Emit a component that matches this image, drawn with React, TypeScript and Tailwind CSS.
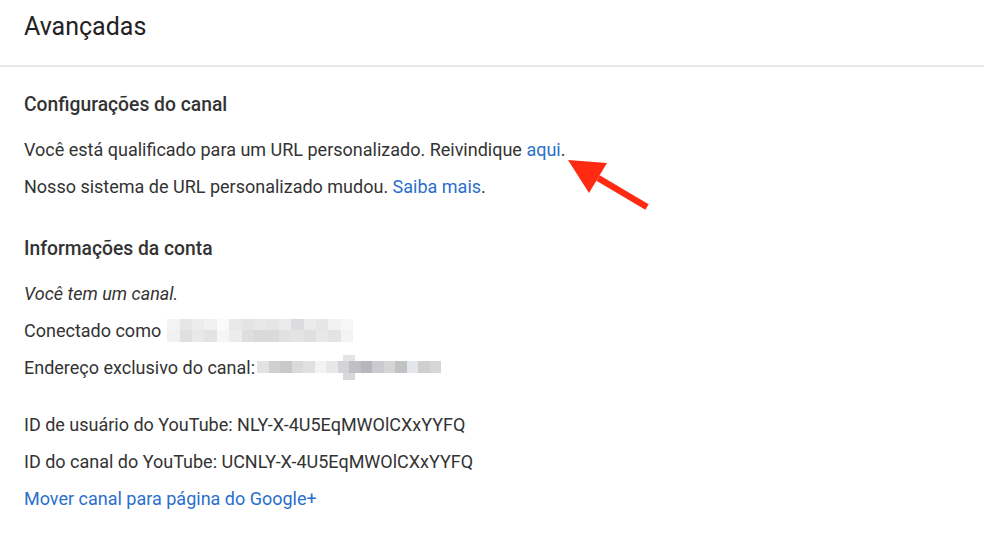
import React from "react";

const blur1: string[][] = [
  ["#f3f3f3", "#e6e6e6", "#ececec", "#f1f1f1", "#fafafa", "#e9e9e9", "#e4e4e4", "#e8e8e8", "#e6e6e6", "#eaeaea", "#dcdce0", "#ebebeb", "#e6e6e6", "#f2f2f2", "#f6f6f6"],
  ["#f1f1f1", "#e0e0e0", "#e9e9e9", "#e3e3e3", "#f6f6f6", "#ececec", "#dedede", "#d9d9d9", "#dadada", "#e1e1e1", "#e4e4e4", "#dfdfdf", "#e8e8e8", "#e3e3e3", "#f3f3f3"],
];
const blur2: string[] = [
  "#e2e2e2", "#cfcfcf", "#c8c8c8", "#dadada", "#e0e0e0", "#f3f3f3", "#e8e8e8", "#d4d4d6", "#c0c0c4", "#b6b6bc", "#cacad0", "#d5d5d8", "#c2c2c2", "#e3e6ea", "#cfcfcf", "#d6d6d6",
];

function Blur1() {
  return (
    <span className="inline-flex flex-col ml-[6px] align-middle">
      {blur1.map((row, i) => (
        <span key={i} className="flex">
          {row.map((c, j) => (
            <span key={j} className="block w-[12.4px] h-[11.5px]" style={{ background: c }} />
          ))}
        </span>
      ))}
    </span>
  );
}

function Blur2() {
  return (
    <span className="inline-flex align-middle ml-[2px] relative">
      {blur2.map((c, j) => (
        <span key={j} className="block w-[11.5px] h-[12px]" style={{ background: c }} />
      ))}
      <span className="absolute left-[86px] -top-[6px] w-[12px] h-[6px] bg-[#e4e4e6]" />
      <span className="absolute left-[86px] top-[12px] w-[12px] h-[7px] bg-[#d8d8dc]" />
    </span>
  );
}

function Row({ children, className = "" }: { children: React.ReactNode; className?: string }) {
  return <div className={`h-[37px] flex items-center whitespace-nowrap ${className}`}>{children}</div>;
}

export default function App() {
  return (
    <div
      className="relative w-[984px] h-[541px] bg-white text-[#333333] overflow-hidden"
      style={{ fontFamily: "Roboto, 'Liberation Sans', sans-serif" }}
    >
      <div className="h-[65px] px-6 pt-[11px]">
        <h1 className="text-[25px] leading-[32px] font-normal text-[#222222]">Avançadas</h1>
      </div>
      <div className="h-[2px] bg-[#e8e8e8]" />
      <div className="px-6 pt-[19.5px] text-[18px]">
        <Row className="font-medium text-[19.3px] text-[#333333]">Configurações do canal</Row>
        <div className="h-[7px]" />
        <Row>
          <span>
            Você está qualificado para um URL personalizado. Reivindique{" "}
            <span className="text-[#2a6fcb]">aqui</span>.
          </span>
        </Row>
        <Row>
          <span>
            Nosso sistema de URL personalizado mudou. <span className="text-[#2a6fcb]">Saiba mais</span>.
          </span>
        </Row>
        <div className="h-[26px]" />
        <Row className="font-medium text-[19.3px]">Informações da conta</Row>
        <div className="h-[7px]" />
        <Row className="italic">Você tem um canal.</Row>
        <Row>
          <span className="flex items-center">
            Conectado como <Blur1 />
          </span>
        </Row>
        <Row>
          <span className="flex items-center">
            Endereço exclusivo do canal:<Blur2 />
          </span>
        </Row>
        <div className="h-[20px]" />
        <Row>ID de usuário do YouTube: NLY-X-4U5EqMWOlCXxYYFQ</Row>
        <Row>ID do canal do YouTube: UCNLY-X-4U5EqMWOlCXxYYFQ</Row>
        <Row className="text-[#2a6fcb]">Mover canal para página do Google+</Row>
      </div>
      <svg className="absolute left-0 top-0" width="984" height="541" viewBox="0 0 984 541">
        <line x1="598" y1="178" x2="647" y2="207" stroke="#ff2a12" strokeWidth="6.5" strokeLinecap="butt" />
        <polygon points="568,160 607,163 589,193" fill="#ff2a12" />
      </svg>
    </div>
  );
}
